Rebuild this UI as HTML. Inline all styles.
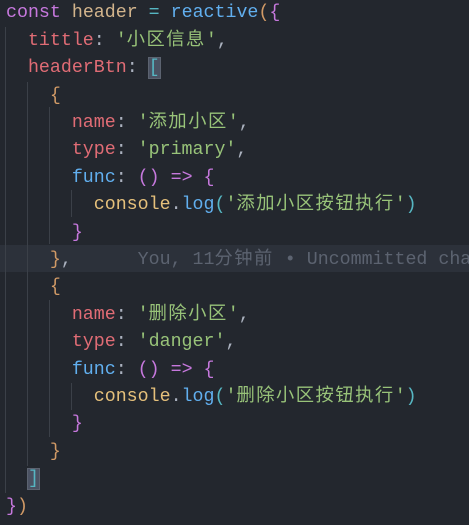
<!DOCTYPE html>
<html><head><meta charset="utf-8"><style>
html,body{margin:0;padding:0;background:#23272e;width:469px;height:525px;overflow:hidden}
.c{position:relative;width:469px;height:525px;overflow:hidden;font-family:"Liberation Mono","Noto Sans CJK SC",monospace;font-size:18.3px;color:#abb2bf}
.l{position:absolute;left:6px;right:0;overflow:hidden;height:27.4px;line-height:27.4px;white-space:pre}
.hl{position:absolute;left:0;width:469px;top:245px;height:27px;background:#2c313a}
.g{position:absolute;width:1px;background:#3b4048}
.k{color:#c678dd}.v{color:#d2b48c}.o{color:#56b6c2}.f{color:#61afef}.p{color:#e06c75}.s{color:#98c379}
.y{color:#d19a66}.m{color:#c678dd}.cy{color:#56b6c2}.cn{color:#e5c07b}
.bx{background:#4b5263;outline:1px solid #5c6370}
.gh{color:#5c6370}
.z{letter-spacing:1.5px}
</style></head><body><div class="c">
<div class="hl"></div>
<div class="g" style="left:5px;top:27px;height:466px"></div>
<div class="g" style="left:27px;top:82px;height:384px"></div>
<div class="g" style="left:49px;top:107px;height:137px"></div>
<div class="g" style="left:49px;top:300px;height:137px"></div>
<div class="g" style="left:71px;top:190px;height:27px"></div>
<div class="g" style="left:71px;top:383px;height:27px"></div>
<div class="l" style="top:0.3px"><span class="k">const</span> <span class="v">header</span> <span class="o">=</span> <span class="f">reactive</span><span class="y">(</span><span class="m">{</span></div>
<div class="l" style="top:27.7px">  <span class="p">tittle</span>: <span class="s">'<span class="z">小区信息</span>'</span>,</div>
<div class="l" style="top:55.1px">  <span class="p">headerBtn</span>: <span class="cy bx">[</span></div>
<div class="l" style="top:82.5px">    <span class="y">{</span></div>
<div class="l" style="top:109.9px">      <span class="p">name</span>: <span class="s">'<span class="z">添加小区</span>'</span>,</div>
<div class="l" style="top:137.3px">      <span class="p">type</span>: <span class="s">'primary'</span>,</div>
<div class="l" style="top:164.7px">      <span class="f">func</span>: <span class="m">()</span> <span class="k">=&gt;</span> <span class="m">{</span></div>
<div class="l" style="top:192.1px">        <span class="cn">console</span>.<span class="f">log</span><span class="cy">(</span><span class="s">'<span class="z">添加小区按钮执行</span>'</span><span class="cy">)</span></div>
<div class="l" style="top:219.5px">      <span class="m">}</span></div>
<div class="l" style="top:246.9px">    <span class="y">}</span>,      <span class="gh">You, 11<span class="z">分钟前</span> • Uncommitted changes</span></div>
<div class="l" style="top:274.3px">    <span class="y">{</span></div>
<div class="l" style="top:301.7px">      <span class="p">name</span>: <span class="s">'<span class="z">删除小区</span>'</span>,</div>
<div class="l" style="top:329.1px">      <span class="p">type</span>: <span class="s">'danger'</span>,</div>
<div class="l" style="top:356.5px">      <span class="f">func</span>: <span class="m">()</span> <span class="k">=&gt;</span> <span class="m">{</span></div>
<div class="l" style="top:383.9px">        <span class="cn">console</span>.<span class="f">log</span><span class="cy">(</span><span class="s">'<span class="z">删除小区按钮执行</span>'</span><span class="cy">)</span></div>
<div class="l" style="top:411.3px">      <span class="m">}</span></div>
<div class="l" style="top:438.7px">    <span class="y">}</span></div>
<div class="l" style="top:466.1px">  <span class="cy bx">]</span></div>
<div class="l" style="top:493.5px"><span class="m">}</span><span class="y">)</span></div>
</div></body></html>
